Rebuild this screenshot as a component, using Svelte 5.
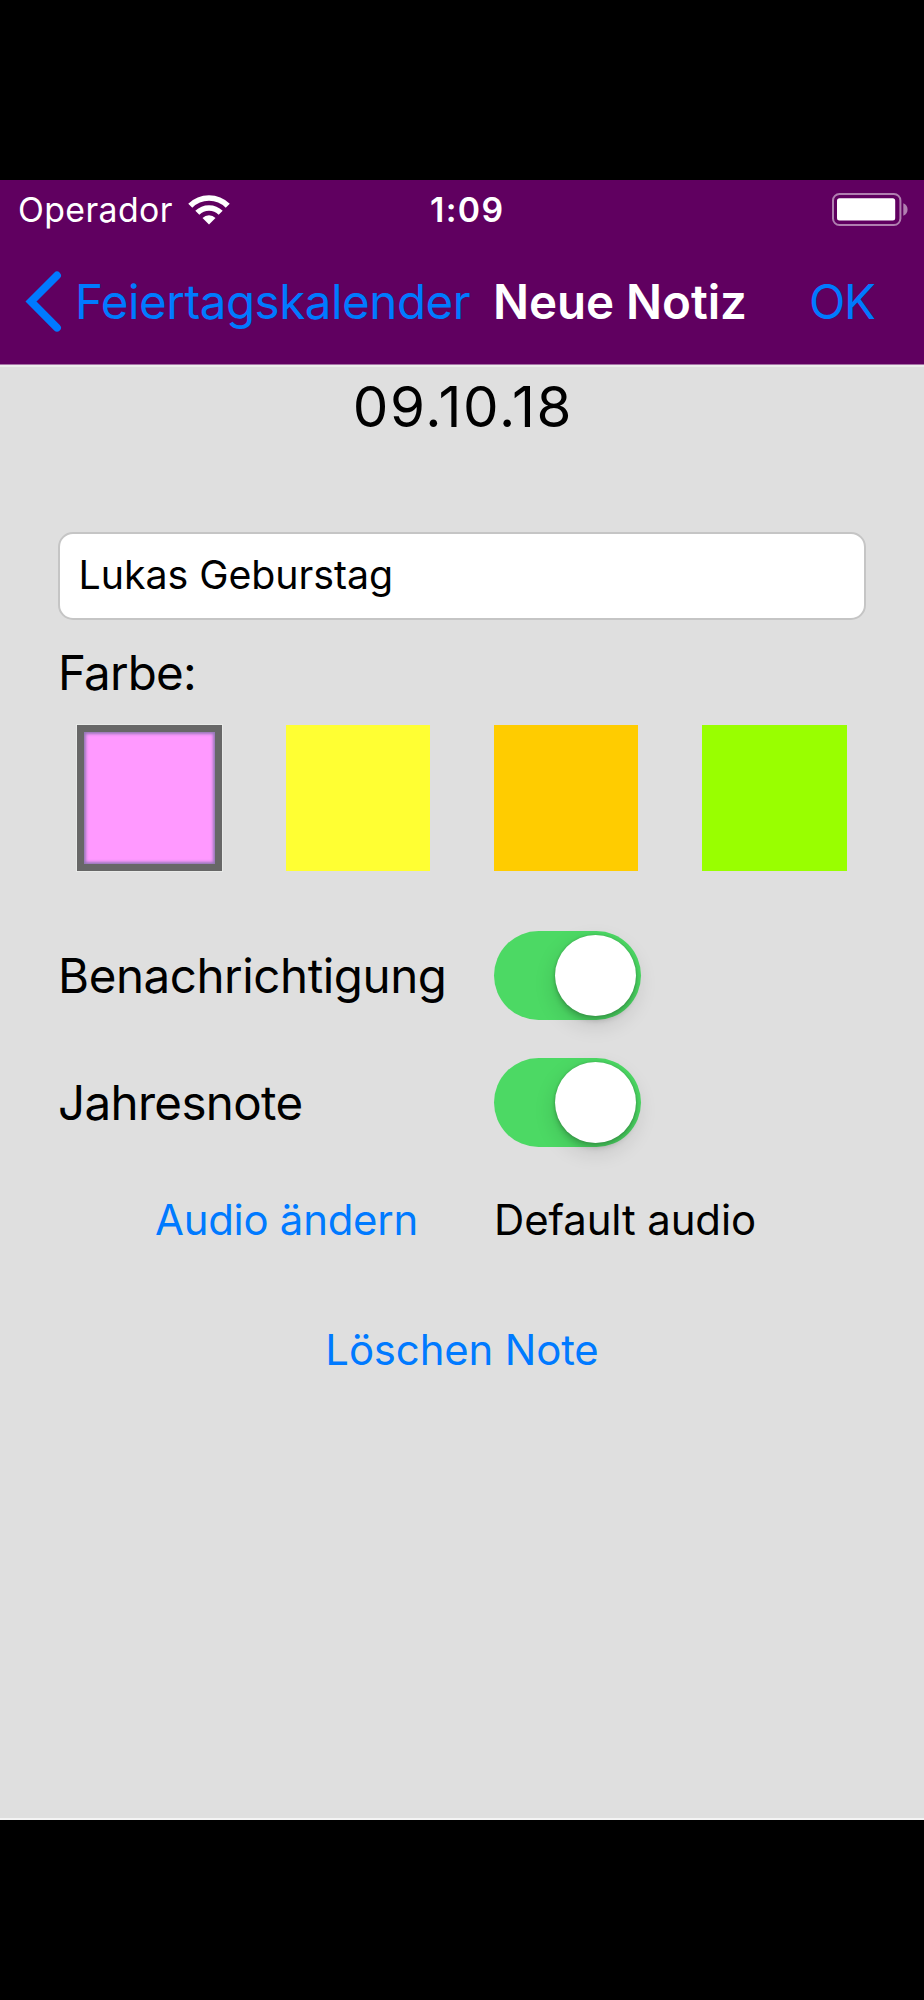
<script>
  let note = $state('Lukas Geburstag');
  let selected = $state(0);
  const colors = ['#ff99ff', '#ffff33', '#ffcc00', '#99ff00'];
  const options = $state([
    { label: 'Benachrichtigung', on: true, tracking: -0.44 },
    { label: 'Jahresnote', on: true, tracking: -0.65 }
  ]);
</script>

<div class="page">
  <div class="screen">
    <header>
      <div class="status">
        <div class="carrier">
          <span class="operator">Operador</span>
          <svg class="wifi" width="42" height="30" viewBox="0 0 42 30">
            <path d="M2.26 10.76A26.5 26.5 0 0 1 39.74 10.76" fill="none" stroke="#fff" stroke-width="5.7" />
            <path d="M9.33 17.83A16.5 16.5 0 0 1 32.67 17.83" fill="none" stroke="#fff" stroke-width="5.7" />
            <path d="M21 29.5L14.5 23A9.2 9.2 0 0 1 27.5 23Z" fill="#fff" />
          </svg>
        </div>
        <span class="time">1:09</span>
        <svg class="battery" width="78" height="34" viewBox="0 0 78 34">
          <rect x="1" y="1" width="67.4" height="31" rx="6.5" fill="none" stroke="#b07fb0" stroke-width="2" />
          <rect x="5" y="5.2" width="58.2" height="22.4" rx="2.5" fill="#fff" />
          <path d="M71.3 10.3C77 12 77 21 71.3 22.7Z" fill="#b07fb0" />
        </svg>
      </div>
      <nav>
        <button class="back">
          <svg width="38" height="64" viewBox="0 0 38 64">
            <path d="M32 5.5L6 31.6L32 57.7" fill="none" stroke="#007aff" stroke-width="7.8" stroke-linecap="round" stroke-linejoin="miter" />
          </svg>
          <span>Feiertagskalender</span>
        </button>
        <h1>Neue Notiz</h1>
        <button class="ok">OK</button>
      </nav>
    </header>

    <main>
      <div class="date">09.10.18</div>
      <input class="note" type="text" bind:value={note} />
      <div class="caption">Farbe:</div>
      <div class="swatches">
        {#each colors as color, i}
          <button
            class="swatch"
            class:selected={selected === i}
            style="background: {color}"
            aria-label={color}
            onclick={() => (selected = i)}
          ></button>
        {/each}
      </div>
      {#each options as option}
        <div class="option">
          <span class="name" style="letter-spacing: {option.tracking}px">{option.label}</span>
          <button
            class="toggle"
            class:on={option.on}
            role="switch"
            aria-checked={option.on}
            aria-label={option.label}
            onclick={() => (option.on = !option.on)}
          ><i></i></button>
        </div>
      {/each}
      <div class="audio">
        <button>Audio ändern</button>
        <span>Default audio</span>
      </div>
      <button class="remove">Löschen Note</button>
    </main>
  </div>
</div>

<style>
  :global(body) { margin: 0; background: #000; }
  .page {
    box-sizing: border-box;
    width: 924px;
    height: 2000px;
    padding-top: 180px;
    background: #000;
    font-family: Inter, sans-serif;
    color: #000;
    overflow: hidden;
  }
  button {
    appearance: none;
    border: 0;
    padding: 0;
    background: none;
    font: inherit;
    letter-spacing: inherit;
    color: #007aff;
    text-align: left;
    white-space: nowrap;
  }
  header {
    box-sizing: border-box;
    height: 185px;
    border-bottom: 1px solid #a674a6;
    background: #600060;
    color: #fff;
  }
  .status {
    display: grid;
    grid-template-columns: 430px 401.5px 1fr;
    align-items: center;
    height: 59px;
    font-size: 33.8px;
    line-height: 40px;
  }
  .carrier { display: flex; align-items: center; padding-left: 18px; }
  .operator { width: 170px; letter-spacing: 0.4px; }
  .time { font-weight: 600; letter-spacing: 1.4px; }
  svg { display: block; }
  nav {
    display: grid;
    grid-template-columns: 493px 316px 1fr;
    align-items: center;
    height: 126px;
    font-size: 47.5px;
    line-height: 58px;
  }
  .back {
    display: flex;
    align-items: center;
    gap: 12px;
    padding-left: 25px;
    letter-spacing: -0.46px;
  }
  h1 { margin: 0; font-size: inherit; font-weight: 600; letter-spacing: -0.05px; }
  .ok { letter-spacing: -1.32px; }
  main {
    box-sizing: border-box;
    height: 1455px;
    padding: 10px 58px 0;
    border-top: 2px solid #ebedeb;
    border-bottom: 2px solid #f4f4f4;
    background: #dfdfdf;
  }
  .date {
    height: 60px;
    margin-bottom: 95px;
    padding-left: 2px;
    font-size: 56.5px;
    line-height: 60px;
    letter-spacing: 1.65px;
    text-align: center;
  }
  .note {
    display: block;
    box-sizing: border-box;
    width: 808px;
    height: 88px;
    margin: 0;
    padding: 0 0 3px 18.5px;
    border: 2px solid #c5c5c5;
    border-radius: 15px;
    outline: none;
    background: #fff;
    font: 39.3px Inter, sans-serif;
    letter-spacing: -0.04px;
    color: #000;
  }
  .caption {
    height: 60px;
    margin-top: 23px;
    font-size: 47.5px;
    line-height: 60px;
    letter-spacing: -0.8px;
  }
  .swatches {
    display: grid;
    grid-template-columns: repeat(4, 144.4px);
    gap: 63.9px;
    margin: 22px 0 41px 19.3px;
  }
  .swatch { height: 146px; }
  .swatch.selected {
    box-shadow: inset 0 0 0 7px #676767, inset 0 0 3px 9px #9678b8, 0 0 0 1px #e8eae8;
  }
  .option {
    display: grid;
    grid-template-columns: 435.7px auto;
    align-items: center;
    height: 127px;
    font-size: 47.5px;
    line-height: 58px;
  }
  .toggle {
    box-sizing: border-box;
    display: flex;
    align-items: center;
    width: 147px;
    height: 89px;
    padding: 0 4.4px;
    border-radius: 45px;
    background: #c8c8c8;
  }
  .toggle.on { justify-content: flex-end; background: #4cd964; }
  .toggle i {
    width: 81.5px;
    height: 81.5px;
    border-radius: 50%;
    background: #fff;
    box-shadow: 0 8px 22px rgba(0, 0, 0, 0.14), 0 5px 5px rgba(0, 0, 0, 0.14), 0 0 3px rgba(0, 0, 0, 0.22);
  }
  .audio, .remove { font-size: 41.9px; line-height: 52px; }
  .audio { display: grid; grid-template-columns: 339px auto; padding-left: 97px; margin-top: 28px; letter-spacing: -0.1px; }
  .audio button { letter-spacing: -0.25px; }
  .remove { display: block; margin: 78px auto 0; letter-spacing: -0.14px; }
</style>
